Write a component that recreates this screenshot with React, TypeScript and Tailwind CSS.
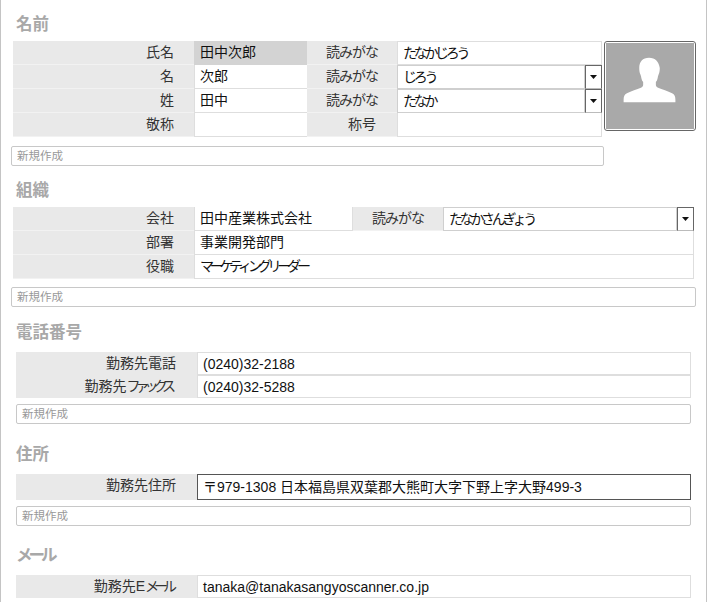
const sans = "font-['Liberation_Sans','Noto_Sans_CJK_JP',sans-serif]";

const SectionTitle = ({ text, className = '' }: { text: string; className?: string }) => (
  <h2 className={`ml-[15px] h-5 text-[16.5px] leading-5 font-bold text-[#a8a8a8] ${className}`}>{text}</h2>
);

const NewInput = ({ className = '' }: { className?: string }) => (
  <div className={`h-5 rounded-[2px] border border-[#c8c8c8] bg-white pl-[5px] text-[11.5px] leading-[18px] text-[#999] ${className}`}>
    新規作成
  </div>
);

const Label = ({ children, className = '' }: { children: React.ReactNode; className?: string }) => (
  <div className={`shrink-0 bg-[#e9e9e9] border-b border-[#f2f2f2] text-right text-[14px] leading-[22px] text-[#333] ${className}`}>
    {children}
  </div>
);

const Value = ({ children, className = '' }: { children?: React.ReactNode; className?: string }) => (
  <div className={`border-l border-b border-[#dedede] bg-white pl-[5px] text-[14px] leading-[22px] text-[#111] ${className}`}>
    {children}
  </div>
);

const Dropdown = ({ text }: { text: string }) => (
  <div className="flex flex-1 bg-white">
    <div className="flex-1 border border-[#cfcfcf] pl-[5px] text-[14px] leading-[22px] tracking-[-3.3px] text-[#111]">{text}</div>
    <div className="flex w-[17px] shrink-0 items-center justify-center border border-[#666] border-b-[#bbb] bg-white">
      <svg width="7" height="4" viewBox="0 0 7 4"><path d="M0 0h7L3.5 4z" fill="#111" /></svg>
    </div>
  </div>
);

const Photo = () => (
  <div className="h-[90px] w-[92px] rounded-[3px] border border-[#666] bg-white p-px">
    <div className="h-full w-full bg-[#a9a9a9]">
      <svg viewBox="1 1 90 88" className="h-full w-full">
        <path
          d="M45 16c-6.500 0-10 4.200-10 10.500 0 3 .4 5 1.200 6.800.5 1.200.8 2.400 1 3.700.3 1.600.9 3 1.800 4v2.800c0 1.500-.8 2.300-2.300 3-4 1.800-10 3.400-14.300 5.500-2.600 1.300-3.400 3.200-3.400 6.700v2.500h53v-2.500c0-3.500-.8-5.400-3.400-6.700-4.300-2.100-10.300-3.700-14.300-5.500-1.500-.7-2.300-1.500-2.300-3V41c.9-1 1.500-2.400 1.800-4 .2-1.300.5-2.500 1-3.700.8-1.800 1.200-3.800 1.200-6.800C55 20.200 51.500 16 45 16z"
          fill="#fff"
        />
      </svg>
    </div>
  </div>
);

const YomiLabel = () => <Label className="w-[90px] pr-[19px] tracking-[-1px]">読みがな</Label>;

export default function App() {
  return (
    <div className={`h-[602px] w-[707px] overflow-hidden border-x border-x-[#c4c4c4] bg-white pr-[1px] ${sans}`}>
      {/* 名前 */}
      <SectionTitle text="名前" className="mt-[14px]" />
      <div className="mt-[7px] flex items-start pl-[10px]">
        <div className="w-[593px]">
          <div className="mx-[2px]">
            <div className="flex h-6">
              <Label className="w-[181px] pr-[20px]">氏名</Label>
              <Value className="w-[113px] !border-[#d3d3d3] !bg-[#d3d3d3]">田中次郎</Value>
              <YomiLabel />
              <Value className="flex-1 border-t border-r tracking-[-3.3px]">たなかじろう</Value>
            </div>
            <div className="flex h-6">
              <Label className="w-[181px] pr-[20px]">名</Label>
              <Value className="w-[113px]">次郎</Value>
              <YomiLabel />
              <Dropdown text="じろう" />
            </div>
            <div className="flex h-6">
              <Label className="w-[181px] pr-[20px]">姓</Label>
              <Value className="w-[113px]">田中</Value>
              <YomiLabel />
              <Dropdown text="たなか" />
            </div>
            <div className="flex h-6">
              <Label className="w-[181px] pr-[20px]">敬称</Label>
              <Value className="w-[113px]" />
              <Label className="w-[90px] pr-[21px]">称号</Label>
              <Value className="flex-1 border-r" />
            </div>
          </div>
          <NewInput className="mt-[9px]" />
        </div>
        <Photo />
      </div>

      {/* 組織 */}
      <SectionTitle text="組織" className="mt-[14px]" />
      <div className="mt-[7px] pl-[10px]">
        <div className="mx-[2px] w-[681px]">
          <div className="flex h-6">
            <Label className="w-[181px] pr-[20px]">会社</Label>
            <Value className="w-[159px] border-r">田中産業株式会社</Value>
            <YomiLabel />
            <Dropdown text="たなかさんぎょう" />
          </div>
          <div className="flex h-6">
            <Label className="w-[181px] pr-[20px]">部署</Label>
            <Value className="flex-1 border-r">事業開発部門</Value>
          </div>
          <div className="flex h-6">
            <Label className="w-[181px] pr-[20px] leading-[23px]">役職</Label>
            <Value className="flex-1 border-r leading-[23px] tracking-[-4.2px]">マーケティングリーダー</Value>
          </div>
        </div>
        <NewInput className="mt-[8px] w-[685px]" />
      </div>

      {/* 電話番号 */}
      <SectionTitle text="電話番号" className="mt-[15px]" />
      <div className="ml-[15px] mt-[10px] w-[675px]">
        <div className="flex h-[23px]">
          <Label className="w-[181px] border-b-0 pr-[21px] leading-[21px]">勤務先電話</Label>
          <Value className="flex-1 border-t border-r">(0240)32-2188</Value>
        </div>
        <div className="flex h-[23px]">
          <Label className="w-[181px] border-b-0 pr-[26px] leading-[21px]">
            勤務先<span className="tracking-[-5px]">ファックス</span>
          </Label>
          <Value className="flex-1 border-t border-r">(0240)32-5288</Value>
        </div>
        <NewInput className="mt-[6px]" />
      </div>

      {/* 住所 */}
      <SectionTitle text="住所" className="mt-[20px]" />
      <div className="ml-[15px] mt-[10px] w-[675px]">
        <div className="flex h-[26px]">
          <Label className="w-[181px] border-b-0 pr-[21px]">勤務先住所</Label>
          <div className="flex-1 border border-[#555] bg-white pl-[5px] text-[14px] leading-[24px] text-[#111]">
            〒979-1308 日本福島県双葉郡大熊町大字下野上字大野499-3
          </div>
        </div>
        <NewInput className="mt-[6px]" />
      </div>

      {/* メール */}
      <SectionTitle text="メール" className="mt-[19px] tracking-[-4px]" />
      <div className="ml-[15px] mt-[10px] w-[675px]">
        <div className="flex h-[23px]">
          <Label className="w-[181px] border-b-0 pr-[25px] leading-[21px]">
            勤務先E<span className="tracking-[-5px]">メール</span>
          </Label>
          <Value className="flex-1 border-t border-r">tanaka@tanakasangyoscanner.co.jp</Value>
        </div>
      </div>
    </div>
  );
}
